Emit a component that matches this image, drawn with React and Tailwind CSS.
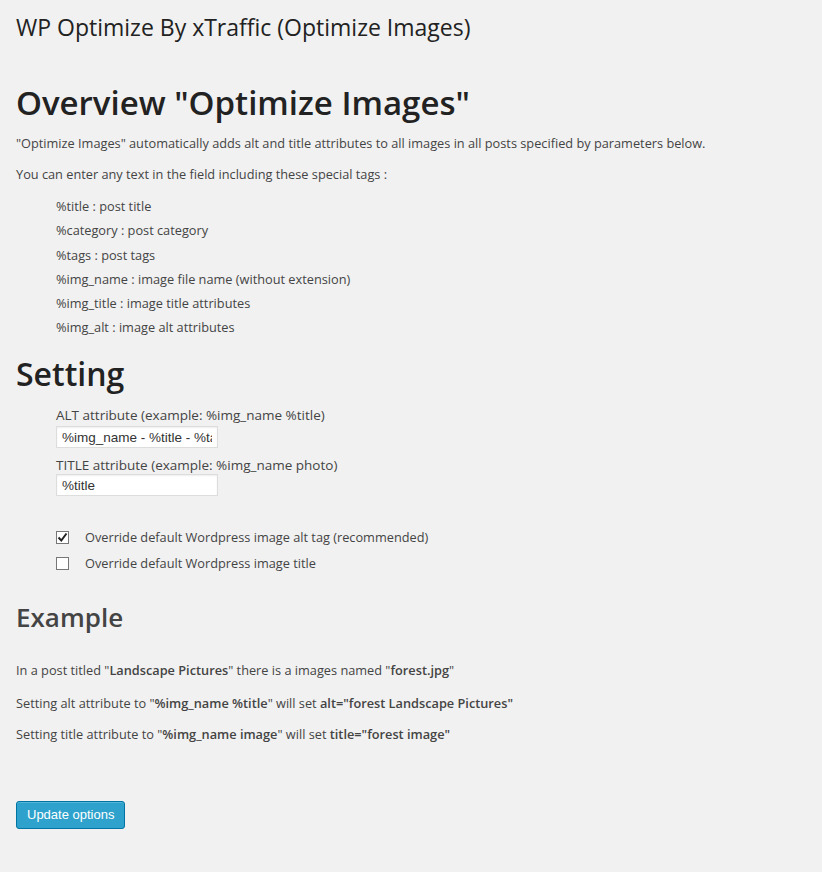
import React from "react";

export default function App() {
  const tags = [
    "%title : post title",
    "%category : post category",
    "%tags : post tags",
    "%img_name : image file name (without extension)",
    "%img_title : image title attributes",
    "%img_alt : image alt attributes",
  ];
  const arial = { fontFamily: '"Liberation Sans", Arial, sans-serif' };
  return (
    <div className="min-h-[872px] w-[822px] bg-[#f1f1f1] text-[#444] text-[12.75px] leading-[1.5]" style={{ fontFamily: '"Open Sans", sans-serif' }}>
      <div className="px-4 pt-[13px]">
        <h2 className="text-[23px] font-normal text-[#222] leading-[29px]">WP Optimize By xTraffic (Optimize Images)</h2>
        <h1 className="mt-[41px] text-[33px] font-semibold text-[#222] leading-[40px]">Overview "Optimize Images"</h1>
        <p className="mt-[11px]">"Optimize Images" automatically adds alt and title attributes to all images in all posts specified by parameters below.</p>
        <p className="mt-[12px]">You can enter any text in the field including these special tags :</p>
        <ul className="mt-[13px] pl-10">
          {tags.map((t) => (
            <li key={t} className="h-[24.2px]">{t}</li>
          ))}
        </ul>
        <h1 className="mt-[12px] text-[32px] font-semibold text-[#222] leading-[40px]">Setting</h1>
        <div className="pl-10 mt-[12px]">
          <div className="text-[13.5px] leading-[18px]">ALT attribute (example: %img_name %title)</div>
          <input
            readOnly
            value="%img_name - %title - %tags"
            className="mt-[2px] w-[162px] h-[22px] bg-white border border-[#ddd] px-[5px] text-[13.5px] text-[#333] outline-none shadow-[inset_0_1px_2px_rgba(0,0,0,0.07)]"
            style={arial}
          />
          <div className="mt-[8px] text-[13.5px] leading-[18px]">TITLE attribute (example: %img_name photo)</div>
          <input
            readOnly
            value="%title"
            className="mt-[0px] w-[162px] h-[22px] bg-white border border-[#ddd] px-[5px] text-[13.5px] text-[#333] outline-none shadow-[inset_0_1px_2px_rgba(0,0,0,0.07)]"
            style={arial}
          />
          <div className="mt-[31px] flex items-center gap-[16px] h-[20px] text-[12.75px]">
            <span className="w-[13px] h-[13px] border border-[#777] bg-white flex items-center justify-center">
              <svg width="11" height="11" viewBox="0 0 11 11">
                <path d="M1.5 5.5 L4.3 8.5 L9.5 1.5" stroke="#222" strokeWidth="2" fill="none" />
              </svg>
            </span>
            <span>Override default Wordpress image alt tag (recommended)</span>
          </div>
          <div className="mt-[6px] flex items-center gap-[16px] h-[20px]">
            <span className="w-[13px] h-[13px] border border-[#777] bg-white"></span>
            <span>Override default Wordpress image title</span>
          </div>
        </div>
        <h2 className="mt-[27px] text-[26px] font-semibold text-[#444] leading-[34px]">Example</h2>
        <p className="mt-[27px]">In a post titled "<b className="font-semibold">Landscape Pictures</b>" there is a images named "<b className="font-semibold">forest.jpg</b>"</p>
        <p className="mt-[13px]">Setting alt attribute to "<b className="font-semibold">%img_name %title</b>" will set <b className="font-semibold">alt="forest Landscape Pictures"</b></p>
        <p className="mt-[12px]">Setting title attribute to "<b className="font-semibold">%img_name image</b>" will set <b className="font-semibold">title="forest image"</b></p>
        <button className="mt-[57px] h-[28px] px-[10px] rounded-[3px] bg-[#2ea2cc] border border-[#0074a2] text-white text-[13px] shadow-[inset_0_1px_0_rgba(120,200,230,0.5)]" style={arial}>
          Update options
        </button>
      </div>
    </div>
  );
}
